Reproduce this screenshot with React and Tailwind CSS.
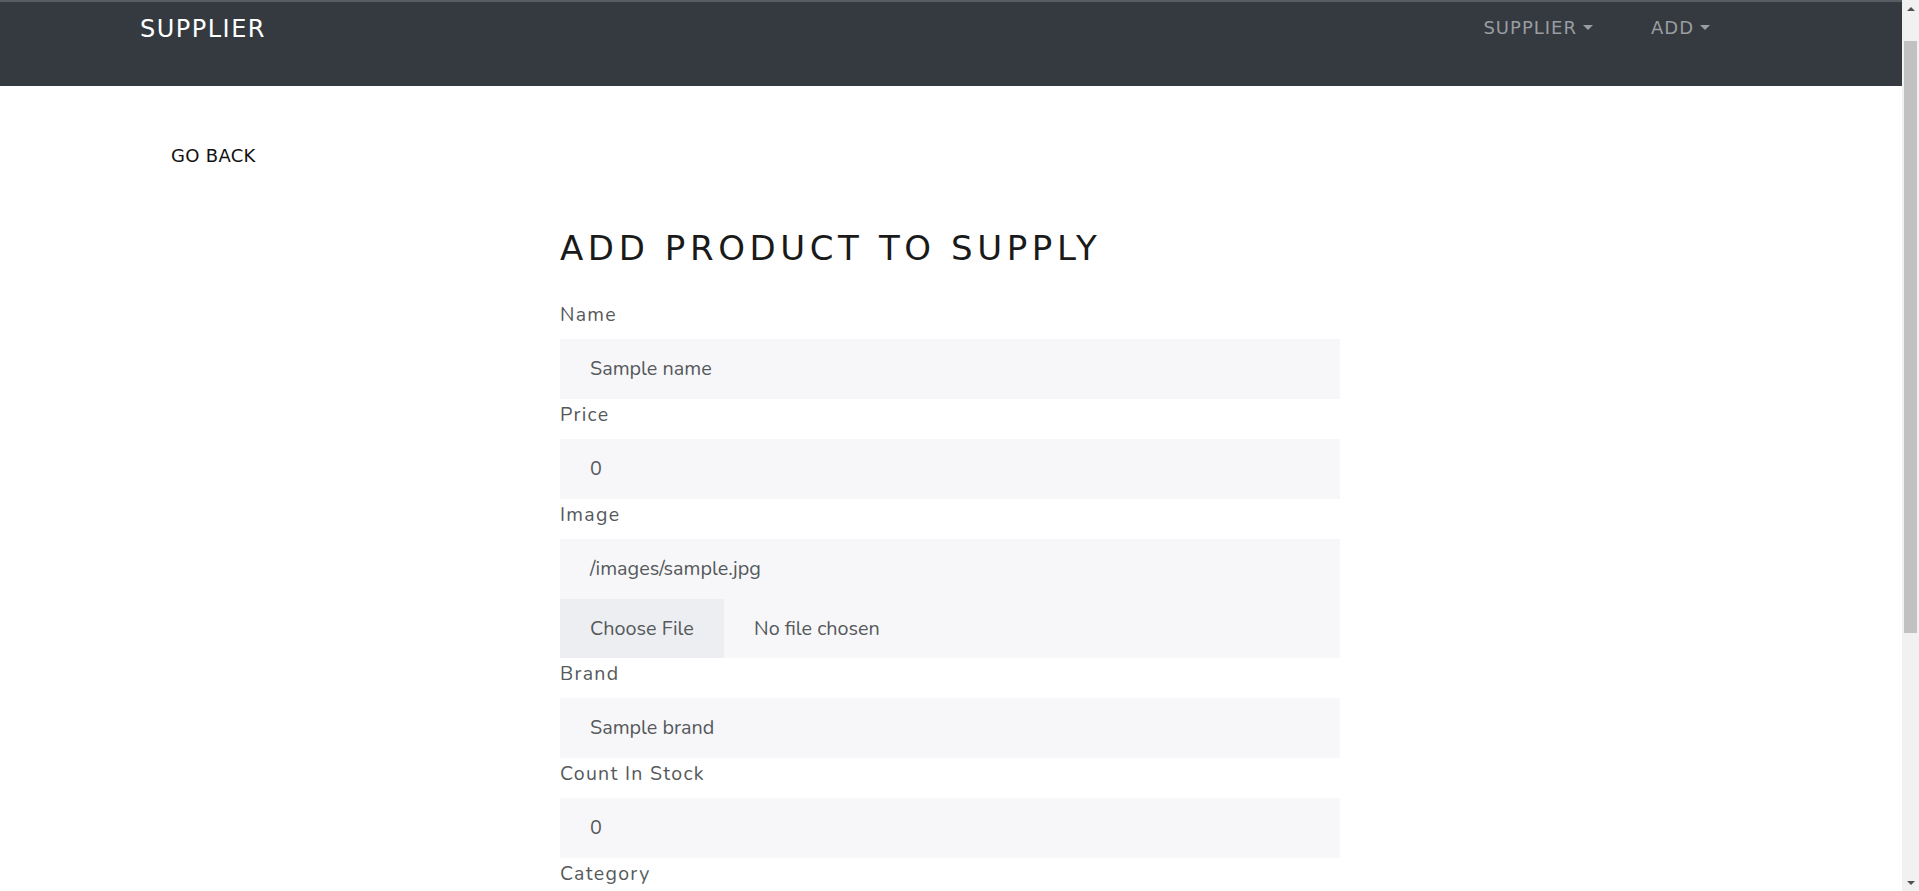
const fields = [
    { label: 'Name', value: 'Sample name' },
    { label: 'Price', value: '0' },
];

const fieldsAfter = [
    { label: 'Brand', value: 'Sample brand' },
    { label: 'Count In Stock', value: '0' },
    { label: 'Category', value: 'Sample category' },
    { label: 'Description', value: 'Sample description' },
];

function Caret() {
    return <span className="inline-block ml-[6px] mb-[3px] border-x-[5px] border-x-transparent border-t-[5px] border-t-[#9a9da0] align-middle" />;
}

function Label({ children }) {
    return (
        <label className="block h-[31px] leading-[31px] mb-[9px] text-[19.5px] tracking-[1.3px] text-[#55595c]">
            {children}
        </label>
    );
}

function Field({ label, value }) {
    return (
        <div>
            <Label>{label}</Label>
            <div className="h-[60px] bg-[#f7f7f9] flex items-center pl-[30px] text-[19.8px] text-[#55595c]">
                {value}
            </div>
        </div>
    );
}

// fake browser scrollbar, as seen in the screenshot
function Scrollbar() {
    return (
        <div className="fixed top-0 right-0 h-screen w-[17px] bg-[#f1f1f1] flex flex-col items-center">
            <div className="h-[17px] flex items-center justify-center">
                <span className="border-x-[4px] border-x-transparent border-b-[4px] border-b-[#505050]" />
            </div>
            <div className="mt-[24px] h-[592px] w-[13px] bg-[#c1c1c1]" />
            <div className="mt-auto h-[17px] flex items-center justify-center">
                <span className="border-x-[4px] border-x-transparent border-t-[4px] border-t-[#505050]" />
            </div>
        </div>
    );
}

export default function App() {
    return (
        <div className="min-h-[1400px] bg-white font-['Nunito','Noto_Sans',sans-serif]">
            {/* Navbar */}
            <header className="h-[86px] bg-[#343a40] border-t-2 border-[#5a5e62] font-['DejaVu_Sans',sans-serif]">
                <div className="flex items-start justify-between pl-[140px] pr-[209px] pt-[7px]">
                    <a className="text-[24px] leading-[40px] tracking-[1.5px] text-white">SUPPLIER</a>
                    <nav className="flex items-center gap-[58px] pt-[5px]">
                        <a className="text-[18px] leading-[28px] tracking-[1px] text-[#9a9da0]">
                            SUPPLIER<Caret />
                        </a>
                        <a className="text-[18px] leading-[28px] tracking-[1px] text-[#9a9da0]">
                            ADD<Caret />
                        </a>
                    </nav>
                </div>
            </header>

            <main>
                <div className="pl-[171px] pt-[56px]">
                    <a className="font-['DejaVu_Sans',sans-serif] text-[18px] leading-[27px] tracking-[0.3px] text-[#111]">GO BACK</a>
                </div>

                <div className="w-[780px] ml-[560px] mt-[59px]">
                    <h1 className="font-['DejaVu_Sans',sans-serif] text-[34px] leading-[41px] tracking-[4.6px] text-[#1a1a1a] mb-[30px]">
                        ADD PRODUCT TO SUPPLY
                    </h1>

                    {fields.map((f) => (
                        <Field key={f.label} {...f} />
                    ))}

                    <div>
                        <Label>Image</Label>
                        <div className="h-[60px] bg-[#f7f7f9] flex items-center pl-[30px] text-[19.8px] text-[#55595c]">
                            /images/sample.jpg
                        </div>
                        <div className="h-[59px] bg-[#f7f7f9] flex items-center text-[19.8px] text-[#55595c]">
                            <span className="h-full w-[164px] bg-[#eceef1] flex items-center pl-[30px]">Choose File</span>
                            <span className="pl-[30px]">No file chosen</span>
                        </div>
                    </div>

                    {fieldsAfter.map((f) => (
                        <Field key={f.label} {...f} />
                    ))}

                    <button className="mt-[24px] bg-[#1a1a1a] text-white px-[30px] py-[16px] text-[15px] tracking-[1px]">ADD</button>
                </div>
            </main>

            <Scrollbar />
        </div>
    );
}
